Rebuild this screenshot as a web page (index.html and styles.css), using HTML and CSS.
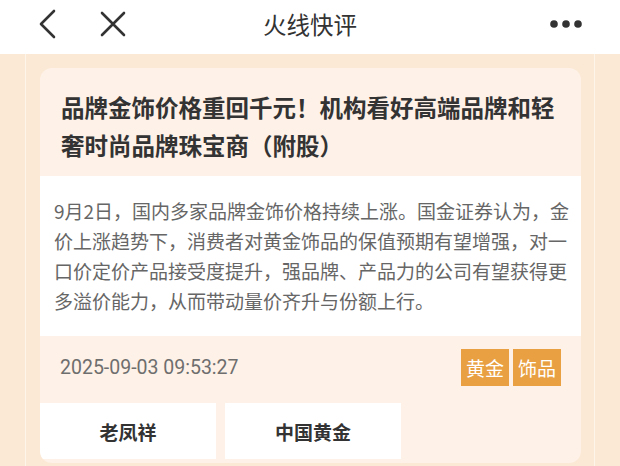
FILE: index.html
```html
<!DOCTYPE html>
<html lang="zh-CN">
<head>
  <meta charset="UTF-8" />
  <title>火线快评</title>
  <link rel="stylesheet" href="styles.css">
</head>
<body>

<header class="topbar">
  <div class="nav-left">
    <svg class="icon-back" width="20" height="30" viewBox="0 0 20 30">
      <path d="M16 2 L3 15 L16 28" fill="none" stroke="#333" stroke-width="2.6" stroke-linecap="round" stroke-linejoin="round"/>
    </svg>
    <svg class="icon-close" width="28" height="28" viewBox="0 0 28 28">
      <path d="M3 3 L25 25 M25 3 L3 25" fill="none" stroke="#333" stroke-width="2.6" stroke-linecap="round"/>
    </svg>
  </div>
  <h1 class="page-title">火线快评</h1>
  <div class="nav-right">
    <svg width="34" height="10" viewBox="0 0 34 10">
      <circle cx="5" cy="5" r="3.8" fill="#333"/>
      <circle cx="17" cy="5" r="3.8" fill="#333"/>
      <circle cx="29" cy="5" r="3.8" fill="#333"/>
    </svg>
  </div>
</header>

<main class="page">
  <article class="news-card">
    <h2 class="news-title">品牌金饰价格重回千元！机构看好高端品牌和轻奢时尚品牌珠宝商（附股）</h2>
    <div class="news-body">
      9月2日，国内多家品牌金饰价格持续上涨。国金证券认为，金价上涨趋势下，消费者对黄金饰品的保值预期有望增强，对一口价定价产品接受度提升，强品牌、产品力的公司有望获得更多溢价能力，从而带动量价齐升与份额上行。
    </div>
    <div class="news-meta">
      <span class="news-time">2025-09-03 09:53:27</span>
      <div class="tags">
        <span class="tag">黄金</span>
        <span class="tag">饰品</span>
      </div>
    </div>
    <div class="stocks">
      <button class="stock">老凤祥</button>
      <button class="stock">中国黄金</button>
    </div>
  </article>
</main>

</body>
</html>
```

FILE: styles.css
```css
body {
  margin: 0;
  padding: 0;
  background-color: #fbe9d5;
  font-family: "Noto Sans CJK SC", "Noto Sans", sans-serif;
  color: #333;
  height: 466px;
  overflow: hidden;
}

.topbar {
  height: 48px;
  padding-bottom: 6px;
  background: #fff;
  display: flex;
  align-items: center;
  justify-content: space-between;
  position: relative;
}

.nav-left {
  display: flex;
  align-items: center;
  gap: 41px;
  padding-left: 38px;
}

.icon-close {
  margin-top: -1px;
}

.page-title {
  position: absolute;
  left: 0;
  right: 0;
  top: 0;
  height: 48px;
  margin: 0;
  line-height: 48px;
  text-align: center;
  font-size: 23.5px;
  font-weight: 400;
  color: #333;
  pointer-events: none;
}

.nav-right {
  padding-right: 37px;
  display: flex;
}

.page {
  margin: 0 25px;
  border-left: 1px solid #fdf4ea;
  border-right: 1px solid #fdf4ea;
  padding: 14px 13px 0 14px;
  min-height: 420px;
}

.news-card {
  background: #fef1e7;
  border-radius: 12px;
  overflow: hidden;
  padding-bottom: 4px;
}

.news-title {
  margin: 0;
  padding: 20px 20px 12px 21px;
  font-size: 23.5px;
  line-height: 38px;
  font-weight: 700;
  color: #333;
}

.news-body {
  background: #fff;
  padding: 20px 9px 20px 14px;
  font-size: 19px;
  line-height: 30px;
  color: #666;
}

.news-meta {
  display: flex;
  align-items: center;
  justify-content: space-between;
  padding: 13px 20px 17px 20px;
}

.news-time {
  font-family: Roboto, "Noto Sans", sans-serif;
  font-size: 19.5px;
  color: #6e6e6e;
}

.tags {
  display: flex;
  gap: 4px;
}

.tag {
  display: block;
  width: 48px;
  height: 37px;
  line-height: 37px;
  text-align: center;
  background: #e8a043;
  color: #fff;
  font-size: 19px;
}

.stocks {
  display: flex;
  gap: 9px;
}

.stock {
  width: 176px;
  height: 56px;
  background: #fff;
  border: none;
  font-family: "Noto Sans CJK SC", sans-serif;
  font-size: 19px;
  font-weight: 700;
  color: #333;
  padding: 0;
}
```
